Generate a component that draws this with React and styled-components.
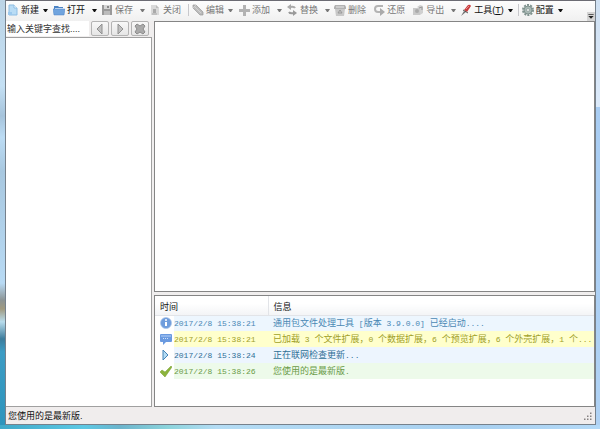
import React from 'react';
import styled, { createGlobalStyle, css } from 'styled-components';

const GlobalStyle = createGlobalStyle`
  * {
    box-sizing: border-box;
  }
  body {
    margin: 0;
    font-family: 'Liberation Sans', 'Noto Sans CJK SC', sans-serif;
    font-size: 9px;
    line-height: 12px;
    color: #111;
  }
  button,
  input {
    font: inherit;
    color: inherit;
    margin: 0;
    padding: 0;
  }
`;

const Frame = styled.div`
  height: 100vh;
  padding: 0 4px 4px 5px;
  background:
    linear-gradient(90deg, #3fa8c8, #5cc8e4 14%, #6cb4cc 20%, #8cd4dc 28%, #b4dcf4 36%, #a8d0f0 80%, #b4daf8)
      bottom / 100% 4px no-repeat,
    linear-gradient(
      #bcd4e6, #c4e0f4 20%, #a6c4dc 27%, #bcdcf4 32%, #a8c8e0 40%, #b8daf4 66%,
      #8c9494 70%, #a09a80 72%, #b8dcec 75%, #3c7c9c 79%, #3c9cc4 82%, #2c94bc
    ) left / 5px 100% no-repeat,
    linear-gradient(#cfe0f2, #dceafa 25%, #a9cdf3 25%, #b0d2f4) right / 5px 100% no-repeat;
`;

const Window = styled.div`
  height: 100%;
  display: flex;
  flex-direction: column;
  background: #f0eeee;
  border: 1px solid #76818c;
  border-top-color: #6c6c74;
`;

const Toolbar = styled.div`
  flex: none;
  height: 20px;
  display: flex;
  align-items: flex-start;
  padding-left: 1px;
  overflow: hidden;
  background: linear-gradient(#fdfdfd, #f0f0f0);
`;

const arrowSpace = {
  menu: '0 5px 0 4px',
  split: '0 4px 0 7px',
};

const ToolButton = styled.button`
  flex: none;
  height: 18px;
  display: flex;
  align-items: center;
  gap: 2px;
  padding-right: ${({ $kind }) => ($kind ? 0 : '7px')};
  border: 0;
  background: none;
  white-space: nowrap;
  color: #111;
  &:disabled {
    color: #777;
  }
  svg {
    flex: none;
  }
`;

const Label = styled.span`
  display: flex;
  align-items: center;
`;

const Arrow = styled.span`
  width: 5px;
  margin: ${({ $kind }) => arrowSpace[$kind]};
  border: 2px solid transparent;
  border-top: 3px solid currentColor;
  border-bottom: 0;
`;

const Separator = styled.span`
  flex: none;
  width: 1px;
  height: 12px;
  margin: 3px 3px 0 0;
  background: #c8c8cc;
`;

const Overflow = styled.button`
  flex: none;
  align-self: flex-end;
  width: 8px;
  height: 9px;
  margin-left: auto;
  display: flex;
  border: 0;
  background: #d4d4d4;
`;

const Main = styled.main`
  flex: 1;
  min-height: 0;
  display: grid;
  grid-template-columns: 146px minmax(0, 1fr);
  gap: 2px;
`;

const Side = styled.aside`
  display: flex;
  flex-direction: column;
  min-height: 0;
`;

const SearchRow = styled.form`
  flex: none;
  height: 16px;
  display: flex;
  gap: 2px;
  padding-right: 3px;
`;

const SearchInput = styled.input`
  flex: 1;
  min-width: 0;
  height: 15px;
  padding-left: 1px;
  border: 0;
  background: #fff;
  &::placeholder {
    color: #333;
    opacity: 1;
  }
`;

const SearchButton = styled.button`
  flex: none;
  width: 18px;
  height: 15px;
  display: flex;
  align-items: center;
  justify-content: center;
  border: 1px solid #b4b4b4;
  border-radius: 2px;
  background: linear-gradient(#f8f8f8, #e6e6e6);
`;

const panel = css`
  background: #fff;
  border: 1px solid #858585;
`;

const Tree = styled.div`
  flex: 1;
  ${panel}
  border-left: 0;
  border-color: #a0a0a0;
`;

const Content = styled.div`
  display: flex;
  flex-direction: column;
  gap: 3px;
  min-height: 0;
`;

const Preview = styled.div`
  flex: 1;
  ${panel}
`;

const Log = styled.div`
  flex: none;
  height: 112px;
  overflow: hidden;
  ${panel}
`;

const LogTable = styled.table`
  width: 100%;
  table-layout: fixed;
  border-collapse: collapse;
  th,
  td {
    padding: 0;
    text-align: left;
    font-weight: normal;
    white-space: nowrap;
    overflow: hidden;
  }
  th {
    height: 19px;
    padding: 3px 0 0 5px;
    background: linear-gradient(#fff 40%, #f3f4f6);
    border-bottom: 1px solid #e2e4e8;
  }
  th + th {
    border-left: 1px solid #e2e4e8;
  }
`;

const IconCol = styled.col`
  width: 19px;
`;

const TimeCol = styled.col`
  width: 94px;
`;

const tones = {
  info: { color: '#4a88b4', background: '#edf6fe' },
  notice: { color: '#a0a028', background: '#ffffcc' },
  step: { color: '#2e6f96', background: '#edf5fe' },
  done: { color: '#6a9a48', background: '#edfaea' },
};

const LogRow = styled.tr`
  height: 16px;
  color: ${({ $tone }) => tones[$tone].color};
  td {
    background: ${({ $tone }) => tones[$tone].background};
  }
  td:first-child {
    padding-left: 5px;
    background: #fff;
  }
  td:last-child {
    padding-left: 5px;
  }
  svg {
    display: block;
  }
`;

const Mono = styled.span`
  font-family: 'Liberation Mono', monospace;
  font-size: 8px;
  white-space: pre;
`;

const StatusBar = styled.footer`
  flex: none;
  height: 17px;
  display: flex;
  align-items: center;
  justify-content: space-between;
  padding: 0 2px;
  background: #f0eded;
`;

const icons = {
  create: (
    <>
      <path d="M2 1h5l3 3v7H2z" fill="#b9dcf5" stroke="#8dbde3" />
      <path d="M7 1v3h3" fill="#fff" stroke="#8dbde3" />
      <path d="M1 8h4v3H1z" fill="#9cc9ee" />
    </>
  ),
  open: (
    <>
      <path d="M1 2h4l1 1h4v3H1z" fill="#4c83c4" />
      <path d="M2 4h8v3H2z" fill="#dcecfb" />
      <path d="M0 5h12l-1 6H1z" fill="#70a4de" stroke="#4c83c4" strokeWidth=".5" />
    </>
  ),
  save: (
    <>
      <path d="M1 1h10v10H1z" fill="#999" />
      <path d="M3 1h6v4H3z" fill="#d6d6d6" />
      <path d="M6 2h2v2H6z" fill="#888" />
      <path d="M3 7h6v4H3z" fill="#bbb" />
    </>
  ),
  close: (
    <>
      <path d="M2 1h5l3 3v7H2z" fill="#d9d9d9" />
      <path d="M7 1v3h3z" fill="#bdbdbd" />
      <path d="M4 5h3v4H4z" fill="#aaa" />
      <path d="M3 9h5v2H3z" fill="#c0c0c0" />
    </>
  ),
  edit: (
    <>
      <path d="M1 1l3 0 7 7 0 3-3 0-7-7z" fill="#bbb" stroke="#9a9a9a" strokeWidth=".7" />
      <path d="M3 3l6 6M1 4l3-3" stroke="#dcdcdc" strokeWidth=".7" />
    </>
  ),
  add: <path d="M5 1h3v4h4v3H8v4H5V8H1V5h4z" fill="#b2b2b2" />,
  replace: (
    <>
      <path d="M9 4Q8 2 4 3" fill="none" stroke="#aaa" strokeWidth="2" />
      <path d="M5 0v6L1 3z" fill="#aaa" />
      <path d="M3 8q1 2 5 1" fill="none" stroke="#999" strokeWidth="2" />
      <path d="M7 6v6l4-3z" fill="#999" />
    </>
  ),
  remove: (
    <>
      <path d="M1 1h10l1 2v2H0V3z" fill="#b2b2b2" />
      <path d="M1 5h10l-1 7H2z" fill="#c8c8c8" />
      <path d="M2 3h8" stroke="#e6e6e6" />
      <path d="M6 6l2 3H4z" fill="none" stroke="#999" />
    </>
  ),
  restore: (
    <>
      <path d="M10 2H5Q2 2 2 5t3 3h3" fill="none" stroke="#b4b4b4" strokeWidth="2" />
      <path d="M7 4v8l5-4z" fill="#aaa" />
    </>
  ),
  exporting: (
    <>
      <path d="M1 4h7v7H1z" fill="#c9c9c9" />
      <circle cx="5" cy="7" r="2" fill="#aaa" />
      <path d="M5 3l3-2 3 1v7l-3 2V5z" fill="#d0d0d0" />
      <path d="M7 4l3-1v3" fill="none" stroke="#999" />
    </>
  ),
  tools: (
    <>
      <path d="M1 12l3-5 2 1z" fill="#777" />
      <path d="M4 6l4-5q2-1 3 1L7 8z" fill="#c83c3c" />
      <path d="M6 5l3-3" stroke="#ec9090" />
      <path d="M3 6l5 3" stroke="#555" />
    </>
  ),
  settings: (
    <>
      <circle cx="6" cy="6" r="5" fill="none" stroke="#7f928e" strokeWidth="2" strokeDasharray="2 1.14" />
      <circle cx="6" cy="6" r="4" fill="#a8b8b4" stroke="#7f928e" />
      <circle cx="6" cy="6" r="1.5" fill="#eef2f1" stroke="#7f928e" strokeWidth=".6" />
    </>
  ),
  info: (
    <>
      <circle cx="6" cy="6" r="5.5" fill="#6f9ddc" stroke="#a8c4ea" strokeWidth=".7" />
      <circle cx="6" cy="3" r="1" fill="#fff" />
      <path d="M5 5h2v4H5z" fill="#fff" />
    </>
  ),
  notice: (
    <>
      <path d="M1 1h10q1 0 1 1v6q0 1-1 1H6l-3 3V9H1Q0 9 0 8V2q0-1 1-1z" fill="#6a9ae0" />
      <path d="M1 2h10v2H1z" fill="#8fb5ec" />
      <path d="M3 5.5h1m1 0h1m1 0h1" stroke="#cfe0f8" />
    </>
  ),
  step: <path d="M3 1l5 5-5 5z" fill="#b4dcf4" stroke="#4484b8" />,
  done: <path d="M0 7l2-2 3 2 6-6 1 1-7 10z" fill="#8cb43c" stroke="#759c2c" strokeWidth=".5" />,
  previous: <path d="M8 1v10L3 6z" fill="#c0c0c0" stroke="#909090" />,
  next: <path d="M4 1v10l5-5z" fill="#c0c0c0" stroke="#909090" />,
  clear: <path d="M1 3l2-2 3 2 3-2 2 2-2 3 2 3-2 2-3-2-3 2-2-2 2-3z" fill="#aaa" stroke="#8c8c8c" />,
  more: (
    <>
      <path d="M2 3h8v1H2z" fill="#222" />
      <path d="M2 6h8l-4 4z" fill="#222" />
    </>
  ),
  grip: (
    <path
      d="M8 2h2v2H8zM4 6h2v2H4zM8 6h2v2H8zM0 10h2v2H0zM4 10h2v2H4zM8 10h2v2H8z"
      fill="#868282"
    />
  ),
};

const Icon = ({ name, size = 12 }) => (
  <svg width={size} height={size} viewBox="0 0 12 12" aria-hidden="true">
    {icons[name]}
  </svg>
);

const tools = [
  { icon: 'create', label: '新建', kind: 'menu' },
  { icon: 'open', label: '打开', kind: 'split' },
  { icon: 'save', label: '保存', kind: 'split', disabled: true },
  { icon: 'close', label: '关闭', disabled: true },
  null,
  { icon: 'edit', label: '编辑', kind: 'menu', disabled: true },
  { icon: 'add', label: '添加', kind: 'split', disabled: true },
  { icon: 'replace', label: '替换', kind: 'split', disabled: true },
  { icon: 'remove', label: '删除', disabled: true },
  { icon: 'restore', label: '还原', disabled: true },
  { icon: 'exporting', label: '导出', kind: 'split', disabled: true },
  { icon: 'tools', label: '工具', hotkey: 'T', kind: 'menu' },
  null,
  { icon: 'settings', label: '配置', kind: 'menu' },
];

const logs = [
  { tone: 'info', time: '2017/2/8 15:38:21', text: '通用包文件处理工具 [版本 3.9.0.0] 已经启动....' },
  {
    tone: 'notice',
    time: '2017/2/8 15:38:21',
    text: '已加载 3 个文件扩展，0 个数据扩展，6 个预览扩展，6 个外壳扩展，1 个...',
  },
  { tone: 'step', time: '2017/2/8 15:38:24', text: '正在联网检查更新...' },
  { tone: 'done', time: '2017/2/8 15:38:26', text: '您使用的是最新版.' },
];

// latin runs are set in the mono face, the rest keeps the page font
const Message = ({ text }) =>
  text.split(/([ -~]+)/).map((part, i) => (i % 2 ? <Mono key={i}>{part}</Mono> : part));

const App = () => (
  <Frame>
    <GlobalStyle />
    <Window>
      <Toolbar role="toolbar">
        {tools.map((tool, i) =>
          tool ? (
            <ToolButton key={tool.icon} type="button" $kind={tool.kind} disabled={tool.disabled}>
              <Icon name={tool.icon} />
              <Label>
                <span>
                  {tool.label}
                  {tool.hotkey && (
                    <>
                      (<u>{tool.hotkey}</u>)
                    </>
                  )}
                </span>
                {tool.kind && <Arrow $kind={tool.kind} />}
              </Label>
            </ToolButton>
          ) : (
            <Separator key={i} />
          )
        )}
        <Overflow type="button" aria-label="更多">
          <Icon name="more" size={8} />
        </Overflow>
      </Toolbar>
      <Main>
        <Side>
          <SearchRow onSubmit={(e) => e.preventDefault()}>
            <SearchInput type="text" placeholder="输入关键字查找...." aria-label="查找" />
            <SearchButton type="button" aria-label="上一个">
              <Icon name="previous" />
            </SearchButton>
            <SearchButton type="button" aria-label="下一个">
              <Icon name="next" />
            </SearchButton>
            <SearchButton type="button" aria-label="清除">
              <Icon name="clear" />
            </SearchButton>
          </SearchRow>
          <Tree />
        </Side>
        <Content>
          <Preview />
          <Log>
            <LogTable>
              <colgroup>
                <IconCol />
                <TimeCol />
                <col />
              </colgroup>
              <thead>
                <tr>
                  <th colSpan={2}>时间</th>
                  <th>信息</th>
                </tr>
              </thead>
              <tbody>
                {logs.map((log) => (
                  <LogRow key={log.tone} $tone={log.tone}>
                    <td>
                      <Icon name={log.tone} />
                    </td>
                    <td>
                      <Mono>{log.time}</Mono>
                    </td>
                    <td>
                      <Message text={log.text} />
                    </td>
                  </LogRow>
                ))}
              </tbody>
            </LogTable>
          </Log>
        </Content>
      </Main>
      <StatusBar>
        <span>您使用的是最新版.</span>
        <Icon name="grip" size={9} />
      </StatusBar>
    </Window>
  </Frame>
);

export default App;
